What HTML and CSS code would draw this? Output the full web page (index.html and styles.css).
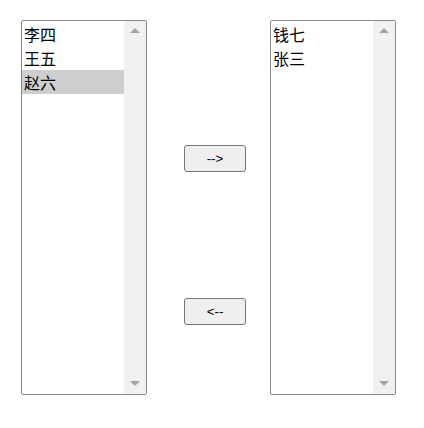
FILE: index.html
```html
<!DOCTYPE html>
<html lang="zh">
<head>
    <meta charset="UTF-8">
    <meta name="viewport" content="width=device-width, initial-scale=1.0">
    <title>列表移动</title>
    <link rel="stylesheet" href="styles.css">
</head>
<body>
    <div class="wrap">
        <div class="list">
            <ul class="items">
                <li>李四</li>
                <li>王五</li>
                <li class="selected">赵六</li>
            </ul>
            <div class="scrollbar">
                <span class="arrow up"></span>
                <span class="arrow down"></span>
            </div>
        </div>
        <div class="actions">
            <button class="btn">--&gt;</button>
            <button class="btn">&lt;--</button>
        </div>
        <div class="list">
            <ul class="items">
                <li>钱七</li>
                <li>张三</li>
            </ul>
            <div class="scrollbar">
                <span class="arrow up"></span>
                <span class="arrow down"></span>
            </div>
        </div>
    </div>
</body>
</html>
```

FILE: styles.css
```css
body {
    margin: 0;
    padding: 0;
    background: #fff;
    font-family: "Noto Sans CJK SC", "Noto Sans", sans-serif;
}
.wrap {
    display: flex;
    padding: 20px 0 0 21px;
}
.list {
    display: flex;
    width: 124px;
    height: 373px;
    border: 1px solid #8a8a8a;
    border-radius: 2px;
}
.items {
    flex: 1;
    list-style: none;
    margin: 0;
    padding: 1px 0 0 0;
    font-size: 16px;
    color: #000;
}
.items li {
    height: 24px;
    line-height: 24px;
    padding-left: 2px;
}
.items .selected {
    background: #cecece;
}
.scrollbar {
    position: relative;
    width: 22px;
    background: #f1f1f1;
}
.arrow {
    position: absolute;
    left: 6px;
    width: 0;
    height: 0;
    border-left: 5px solid transparent;
    border-right: 5px solid transparent;
}
.arrow.up {
    top: 7px;
    border-bottom: 5px solid #a3a3a3;
}
.arrow.down {
    bottom: 8px;
    border-top: 5px solid #a3a3a3;
}
.actions {
    display: flex;
    flex-direction: column;
    gap: 126px;
    width: 123px;
    padding: 125px 0 0 37px;
    box-sizing: border-box;
}
.btn {
    width: 62px;
    height: 27px;
    padding: 0;
    font-family: "Liberation Sans", Arial, sans-serif;
    font-size: 13.33px;
    color: #000;
    background: #efefef;
    border: 1px solid #767676;
    border-radius: 3px;
}
```
